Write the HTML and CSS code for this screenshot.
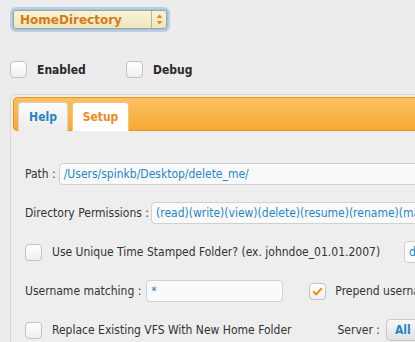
FILE: index.html
```html
<!DOCTYPE html>
<html>
<head>
<meta charset="utf-8">
<link rel="stylesheet" href="styles.css">
</head>
<body>
<div class="page">
  <div class="select-main">
    <span class="select-text">HomeDirectory</span>
    <span class="select-arrows">
      <svg width="7" height="11" viewBox="0 0 7 11"><path d="M3.5 0.5 L6.5 4 L0.5 4 Z" fill="#e08a1a"/><path d="M3.5 10.5 L6.5 7 L0.5 7 Z" fill="#e08a1a"/></svg>
    </span>
  </div>

  <div class="toggles">
    <label class="toggle"><span class="cb"></span><span class="toggle-text">Enabled</span></label>
    <label class="toggle"><span class="cb"></span><span class="toggle-text">Debug</span></label>
  </div>

  <div class="panel">
    <div class="tabbar">
      <div class="tab tab-help">Help</div>
      <div class="tab tab-setup">Setup</div>
    </div>
    <div class="content">
      <div class="row">
        <span class="lbl">Path :</span>
        <span class="input input-path">/Users/spinkb/Desktop/delete_me/</span>
      </div>
      <div class="row">
        <span class="lbl">Directory Permissions :</span>
        <span class="input input-perm">(read)(write)(view)(delete)(resume)(rename)(makedir)(deletedir)</span>
      </div>
      <div class="row">
        <span class="cb"></span>
        <span class="cb-text">Use Unique Time Stamped Folder? (ex. johndoe_01.01.2007)</span>
        <span class="input input-date">dd_MM_yyyy</span>
      </div>
      <div class="row">
        <span class="lbl">Username matching :</span>
        <span class="input input-user">*</span>
        <span class="cb cb-checked">
          <svg width="11" height="9" viewBox="0 0 11 9"><path d="M1.2 4.6 L4.2 7.4 L9.8 1.2" fill="none" stroke="#f08a10" stroke-width="2"/></svg>
        </span>
        <span class="cb-text">Prepend username</span>
      </div>
      <div class="row">
        <span class="cb"></span>
        <span class="cb-text">Replace Existing VFS With New Home Folder</span>
        <span class="lbl lbl-server">Server :</span>
        <span class="select-server">All</span>
      </div>
    </div>
  </div>
</div>
</body>
</html>
```

FILE: styles.css
```css
html, body {
  margin: 0;
  padding: 0;
  overflow: hidden;
  background: #ececec;
}
body {
  font-family: "DejaVu Sans Condensed", "DejaVu Sans", sans-serif;
  font-size: 12px;
  color: #333;
}
.page {
  padding: 10px 0 0 10px;
  width: 800px;
}
.select-main {
  margin-left: 3px;
  width: 154px;
  height: 19px;
  box-sizing: border-box;
  border: 1px solid #a9a77e;
  border-radius: 3px;
  background: linear-gradient(#f8f2da, #efe6c2);
  box-shadow: 0 0 0 1px #9cc1ea, 0 0 0 3px rgba(140, 185, 235, 0.55);
  display: flex;
  align-items: center;
}
.select-text {
  flex: 1;
  padding-left: 6px;
  font-family: "DejaVu Sans", sans-serif;
  font-weight: bold;
  color: #d67a12;
}
.select-arrows {
  width: 14px;
  height: 100%;
  border-left: 1px solid #b8b394;
  display: flex;
  align-items: center;
  justify-content: center;
}
.toggles {
  margin-top: 32px;
  display: flex;
}
.toggle {
  display: flex;
  align-items: center;
  width: 116px;
}
.toggle-text {
  margin-left: 10px;
  font-weight: bold;
  color: #2a2a2a;
}
.cb {
  width: 17px;
  height: 17px;
  box-sizing: border-box;
  border: 1px solid #c3c3c3;
  border-radius: 4px;
  background: linear-gradient(#ffffff, #efefef);
  flex: none;
  display: flex;
  align-items: center;
  justify-content: center;
}
.panel {
  margin-top: 16px;
  border: 1px solid #d6d6d6;
  border-radius: 5px;
  padding: 2px;
  background: #eeeeee;
  height: 400px;
}
.tabbar {
  height: 34px;
  box-sizing: border-box;
  border: 1px solid #e8951c;
  border-radius: 4px;
  background: linear-gradient(#fcc060, #f6aa35);
  padding: 4px 0 0 4px;
  display: flex;
  gap: 4px;
  align-items: flex-end;
}
.tab {
  height: 29px;
  box-sizing: border-box;
  margin-bottom: -1px;
  border-radius: 4px 4px 0 0;
  font-weight: bold;
  font-size: 12px;
  display: flex;
  align-items: center;
  justify-content: center;
}
.tab-help {
  width: 50px;
  border: 1px solid #d4d4d4;
  border-bottom: none;
  background: linear-gradient(#fbfbfb, #ececec);
  color: #1e86c4;
}
.tab-setup {
  width: 57px;
  border: 1px solid #f6c37a;
  border-bottom: none;
  background: #ffffff;
  color: #ef8a1e;
}
.content {
  padding: 32px 0 0 12px;
  display: flex;
  flex-direction: column;
  gap: 17px;
}
.row {
  display: flex;
  align-items: center;
  height: 22px;
}
.lbl {
  white-space: nowrap;
}
.input {
  height: 22px;
  box-sizing: border-box;
  border: 1px solid #d0d0d0;
  border-radius: 4px;
  background: #fafafa;
  color: #1f86c9;
  display: flex;
  align-items: center;
  padding-left: 4px;
  white-space: nowrap;
  overflow: hidden;
}
.input-path { width: 560px; margin-left: 3px; }
.input-perm { width: 500px; margin-left: 2px; }
.input-date { width: 120px; margin-left: 24px; }
.input-user { width: 137px; margin-left: 5px; }
.cb-text {
  margin-left: 10px;
  white-space: nowrap;
}
.cb-checked {
  margin-left: 26px;
}
.cb-checked + .cb-text {
  margin-left: 9px;
}
.lbl-server {
  margin-left: 46px;
}
.select-server {
  margin-left: 6px;
  height: 22px;
  width: 80px;
  box-sizing: border-box;
  border: 1px solid #c8c8c8;
  border-radius: 4px;
  background: linear-gradient(#f6f6f6, #e2e2e2);
  color: #1f86c9;
  font-weight: bold;
  font-size: 12px;
  display: flex;
  align-items: center;
  padding-left: 8px;
}
```
